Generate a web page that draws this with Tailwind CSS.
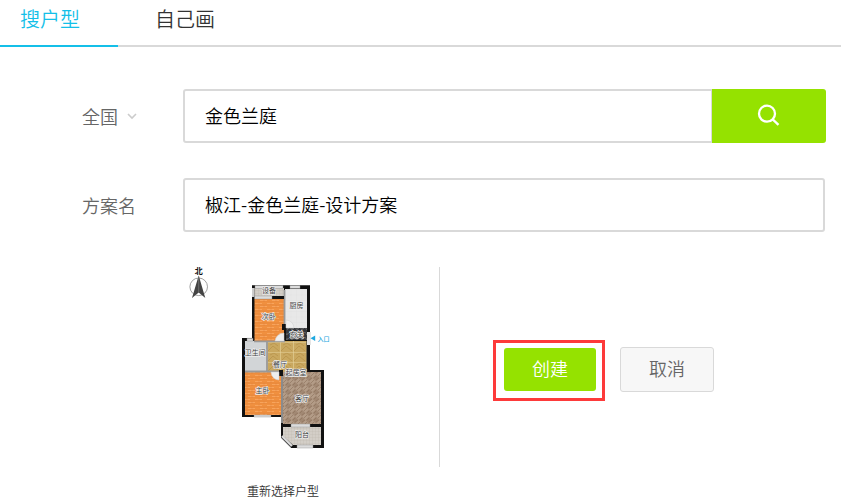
<!DOCTYPE html>
<html lang="zh-CN">
<head>
<meta charset="utf-8">
<meta name="viewport" content="width=device-width, initial-scale=1">
<title>搜户型</title>
<script src="https://cdn.jsdelivr.net/npm/@tailwindcss/browser@4"></script>
</head>
<body class="bg-white font-['Noto_Sans_CJK_SC',sans-serif] text-lg font-[350] text-[#666]">
<nav class="flex h-[47px] border-b-2 border-[#d9d9d9] text-xl leading-[38px]">
  <a href="#search" class="h-[47px] w-[118px] border-b-2 border-[#14bfe8] pl-5 text-[#14bfe8]">搜户型</a>
  <a href="#draw" class="h-[47px] px-[37px] text-[#333]">自己画</a>
</nav>
<main class="pt-[42px] pr-[15px] pl-[82px]">
  <form>
    <div class="flex h-[54px] items-center">
      <div class="flex w-[101px] shrink-0 items-center">
        <select aria-label="地区" class="w-11 appearance-none bg-transparent text-[#666] outline-none">
          <option>全国</option>
        </select>
        <svg class="h-2 w-3" viewBox="0 0 12 8" fill="none" stroke="#ccc" stroke-width="1.6" aria-hidden="true"><path d="M2 2 6 6 10 2"/></svg>
      </div>
      <input type="text" aria-label="小区名称" value="金色兰庭" class="h-full min-w-0 flex-1 rounded-l-[3px] border-2 border-r border-[#d9d9d9] px-5 pb-0.5 text-black outline-none">
      <button type="button" aria-label="搜索" class="flex h-full w-[114px] items-center justify-center rounded-r-[3px] bg-[#95e200]">
        <svg class="h-6 w-6" viewBox="0 0 24 24" fill="none" stroke="white" stroke-width="2.3" aria-hidden="true"><circle cx="10" cy="9.7" r="8"/><path d="m15.7 15.3 5.8 5.6"/></svg>
      </button>
    </div>
    <div class="mt-[35px] mr-px flex h-[54px] items-center">
      <label for="plan-name" class="w-[101px] shrink-0">方案名</label>
      <input id="plan-name" type="text" value="椒江-金色兰庭-设计方案" class="h-full min-w-0 flex-1 rounded-[3px] border-2 border-[#d9d9d9] px-5 pb-0.5 text-black outline-none">
    </div>
    <div class="mt-[34px] flex pl-[101px]">
      <div class="w-[200px] shrink-0 text-center">
        <svg class="h-[200px] w-[200px]" viewBox="0 0 200 200" role="img" aria-label="户型图">
          <defs>
            <pattern id="wood" width="12" height="6" patternUnits="userSpaceOnUse">
              <rect width="12" height="6" fill="#f0903f"/>
              <path d="M0 1.5h7M5 4.5h7" stroke="#f8a45c" stroke-width="1"/>
              <path d="M0 3h12M0 6h12M4 0v3M9 3v3" stroke="#dd7c35" stroke-width=".4"/>
            </pattern>
            <pattern id="tile" x="84" y="76" width="13" height="10" patternUnits="userSpaceOnUse">
              <rect width="13" height="10" fill="#c9a860"/>
              <path d="M1 9 6 4 12 9M3 3l4-2 4 3" stroke="#b8934a" stroke-width=".8" fill="none"/>
              <path d="M0 0H13M0 0V10" stroke="#e6d39c" stroke-width="1.2"/>
            </pattern>
            <pattern id="stone" width="7" height="7" patternUnits="userSpaceOnUse">
              <rect width="7" height="7" fill="#a18873"/>
              <path d="M0 3.5 3.5 0 7 3.5 3.5 7Z" fill="#b39c87"/>
              <path d="M0 2 3 0M2 5l3-3M5 7l2-2" stroke="#8b715b" stroke-width=".6"/>
            </pattern>
            <pattern id="grid" width="3" height="3" patternUnits="userSpaceOnUse">
              <rect width="3" height="3" fill="#d3cec7"/><path d="M0 0h3M0 0v3" stroke="#bdb7ad" stroke-width=".6"/>
            </pattern>
            <pattern id="kitchen" x="102" y="23" width="5.5" height="5.5" patternUnits="userSpaceOnUse">
              <rect width="5.5" height="5.5" fill="#e8e8e8"/><path d="M0 0h5.5M0 0v5.5" stroke="#dcdcdc" stroke-width=".5"/>
            </pattern>
            <pattern id="dark" width="5" height="5" patternUnits="userSpaceOnUse">
              <rect width="5" height="5" fill="#35373b"/><path d="m0 3 2-2 2 3 1-2" stroke="#777" stroke-width=".6" fill="none"/>
            </pattern>
          </defs>
          <!-- compass -->
          <circle cx="15.7" cy="20.8" r="8.8" fill="none" stroke="#888" stroke-width=".8"/>
          <path d="M15.7 9.5 22.3 32 15.7 26.5 9 32Z" fill="#444"/>
          <path d="M15.7 10v16" stroke="#888" stroke-width=".6"/>
          <text x="15.7" y="8" font-size="8" font-weight="700" fill="#111" text-anchor="middle">北</text>
          <!-- walls -->
          <path d="M69 19.3H127V104H141V182H108L98 172V151H59V72H69Z" fill="#111"/>
          <path d="M98 172V182H108Z" fill="#fff"/>
          <path d="M69 22h2.5v9H69z" fill="#ccc"/>
          <!-- rooms -->
          <path d="M71.5 22H101V30H71.5Z" fill="url(#grid)"/>
          <path d="M71.5 33H101V75H71.5Z" fill="url(#wood)"/>
          <path d="M102 23H124V62H102Z" fill="url(#kitchen)"/>
          <path d="M103 62H124V74H103Z" fill="url(#dark)"/>
          <path d="M62 75H84V105H62Z" fill="#d2d5d7"/>
          <path d="M84 75H123.5V106H84Z" fill="url(#tile)"/>
          <path d="M62 106H98V149H62Z" fill="url(#wood)"/>
          <path d="M100 106H138V158H100Z" fill="url(#stone)"/>
          <path d="M100 161H138V179H110L100 170Z" fill="url(#grid)"/>
          <!-- partitions -->
          <path d="M101.5 24V59M71 75.3H102M84 76V106M62 105.5H96M99 108V157" fill="none" stroke="#999" stroke-width="1.8"/>
          <path d="M89 30h12v3H89zM99 58h4.5v6H99zM96 104h4v6h-4z" fill="#111"/>
          <!-- windows and openings -->
          <g fill="#dcdcdc" stroke="#888" stroke-width=".4">
            <path d="M72 19.5H100V22.5H72ZM107 19.5H117V22.5H107ZM71.5 30H89V33H71.5ZM64 72.3H70V75H64ZM71 149H88V151H71ZM108 158H127V161H108ZM114 179H130V182H114Z"/>
          </g>
          <path d="M124 66h4v13h-4z" fill="#e5e5e5"/>
          <path d="m99 170 10 10" stroke="#ddd" stroke-width="2.2"/>
          <path d="m98 171 10 10" stroke="#777" stroke-width=".6"/>
          <!-- doors -->
          <path d="M101 75V67a9 9 0 0 0-9 8ZM103 62v-8a8 8 0 0 1 8 8ZM88 106h8v8a8 8 0 0 1-8-8Z" fill="#eee" stroke="#ccc" stroke-width=".5"/>
          <!-- room names -->
          <g font-size="7" font-weight="400" text-anchor="middle" fill="#444" stroke="#eee" stroke-width="1.4" stroke-linejoin="round" paint-order="stroke">
            <text x="86" y="27">设备</text>
            <text x="113.5" y="41.7">厨房</text>
            <text x="85.7" y="53.4">次卧</text>
            <text x="113.5" y="71.2">玄关</text>
            <text x="72.3" y="89.2">卫生间</text>
            <text x="97" y="100.7">餐厅</text>
            <text x="113" y="109.4">起居室</text>
            <text x="79.5" y="127.4">主卧</text>
            <text x="119" y="134.7">客厅</text>
            <text x="119" y="170.7">阳台</text>
          </g>
          <path d="m127.5 72.3 4.7-2.8v5.6Z" fill="#1fa8e0"/>
          <text x="134.5" y="74.7" font-size="6" font-weight="500" fill="#1fa8e0">入口</text>
        </svg>
        <a href="#reselect" class="mt-4 block text-xs leading-[18px] text-[#333]">重新选择户型</a>
      </div>
      <div class="mt-px ml-14 flex h-[200px] flex-1 items-start border-l border-[#d9d9d9] pt-[73px] pl-[53px]">
        <div class="border-3 border-[#fd3a3a] pt-[5px] pr-1.5 pb-[7px] pl-2">
          <button type="submit" class="block h-[43px] w-[92px] rounded-[3px] bg-[#95e200] pb-1 text-white">创建</button>
        </div>
        <button type="button" class="mt-[7px] ml-[15px] h-[45px] w-[94px] rounded-[3px] border border-[#d9d9d9] bg-[#f7f7f7] pb-1">取消</button>
      </div>
    </div>
  </form>
</main>
</body>
</html>
